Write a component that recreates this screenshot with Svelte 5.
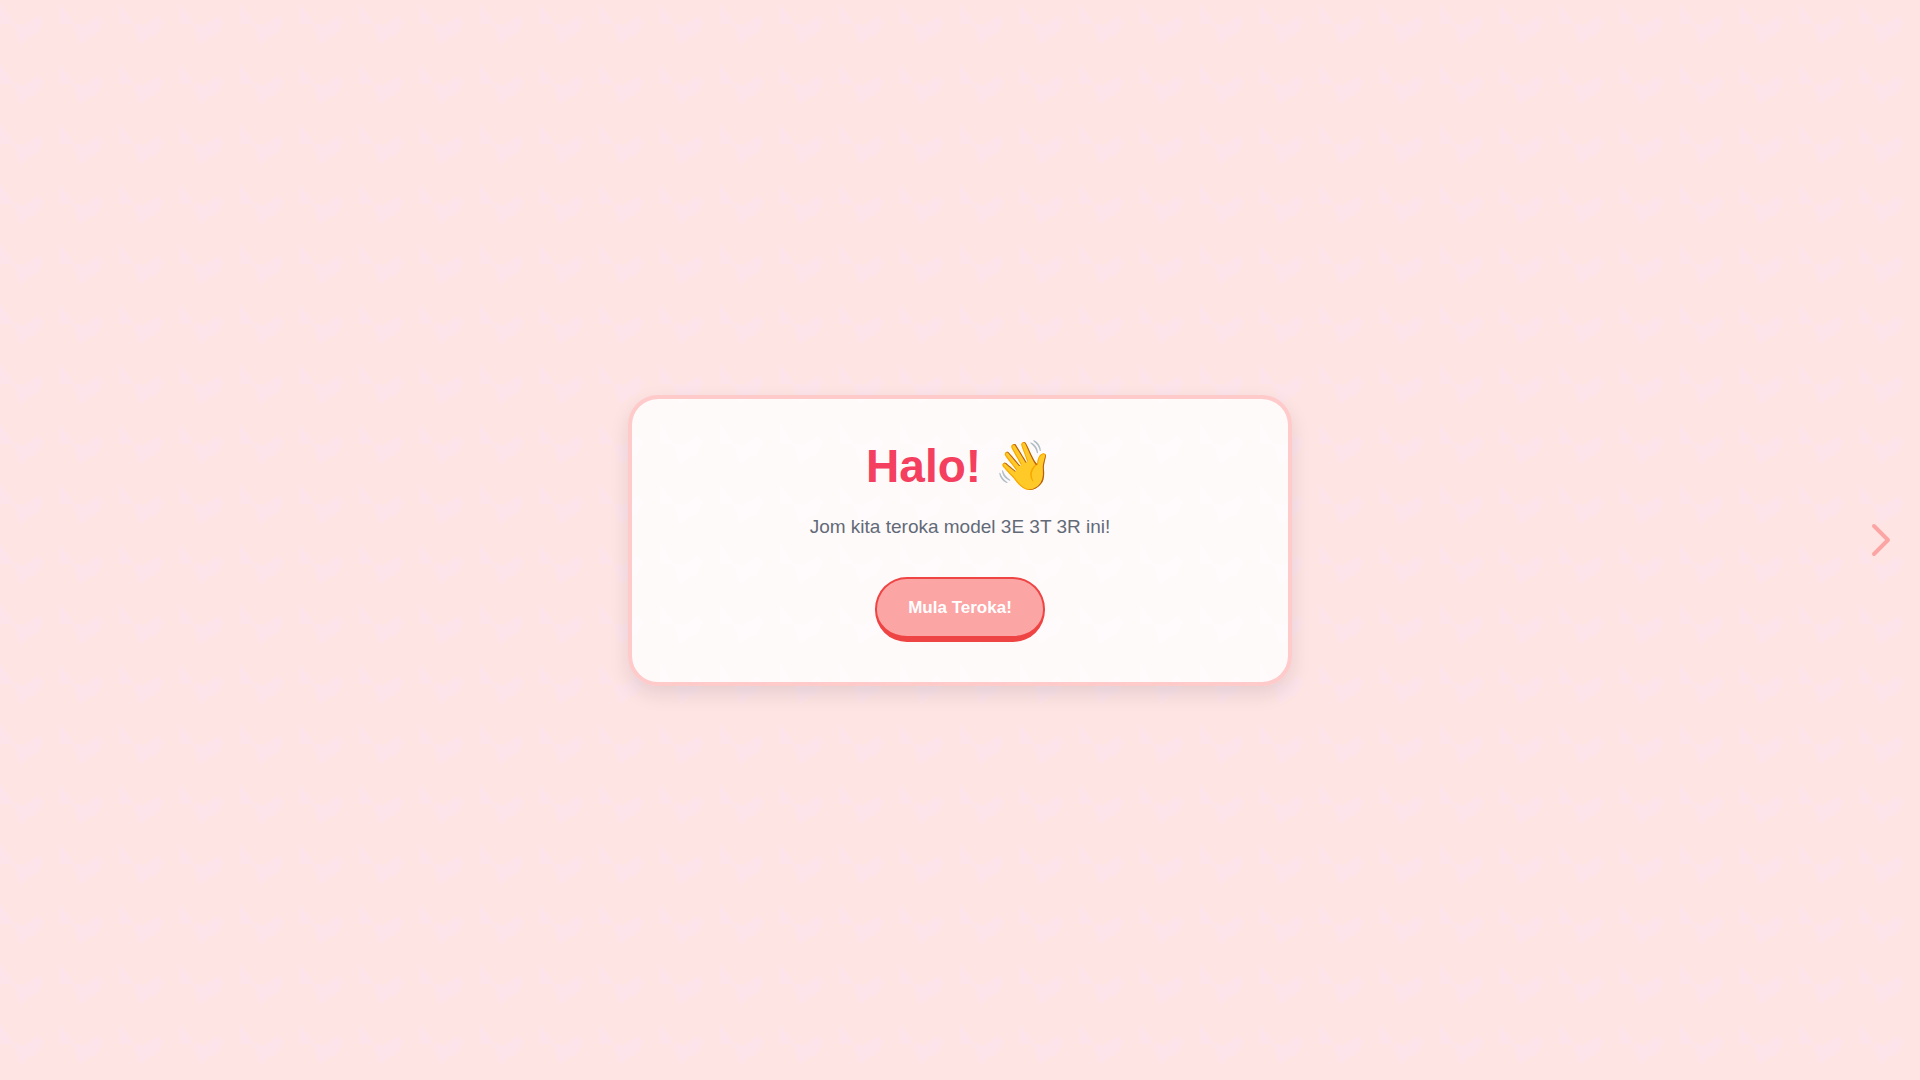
<script>
    let page = $state(0);

    function nextPage() {
        page += 1;
    }
</script>

<main>
    <section class="card">
        <h1>Halo! <span class="wave">👋</span></h1>
        <p>Jom kita teroka model 3E 3T 3R ini!</p>
        <button class="start" type="button" onclick={nextPage}>Mula Teroka!</button>
    </section>
    <button class="next" type="button" aria-label="Seterusnya" onclick={nextPage}>
        <svg viewBox="0 0 48 48" fill="none" stroke="currentColor" stroke-width="4" stroke-linecap="round" stroke-linejoin="round">
            <path d="M18 10l14 14-14 14" />
        </svg>
    </button>
</main>

<style>
    :global(body) {
        margin: 0;
        background-color: #ffe4e4;
        background-image: url("data:image/svg+xml,%3Csvg xmlns='http://www.w3.org/2000/svg' width='60' height='60'%3E%3Cpath fill='%23fde4eb' d='M0 4L14 24H0zM14 24H18L24 26L38 16L43 22L36 35L30 36L20 44z'/%3E%3C/svg%3E");
        font-family: "Liberation Sans", Arial, sans-serif;
    }
    main {
        position: relative;
        display: flex;
        align-items: center;
        justify-content: center;
        min-height: 100vh;
    }
    .card {
        box-sizing: border-box;
        width: 100%;
        max-width: 664px;
        padding: 36px 36px 40px;
        border: 4px solid #fecaca;
        border-radius: 30px;
        background-color: rgba(255, 254, 254, 0.85);
        background-clip: padding-box;
        box-shadow: 0 8px 20px rgba(0, 0, 0, 0.1);
        text-align: center;
    }
    h1 {
        margin: 0 0 15px;
        color: #f43f5e;
        font-size: 46px;
        line-height: 62px;
    }
    .wave {
        font-size: 48px;
        line-height: 1;
    }
    p {
        margin: 0 0 35px;
        color: #626a78;
        font-size: 19px;
        line-height: 30px;
    }
    button {
        font-family: inherit;
        cursor: pointer;
    }
    .start {
        padding: 19px 31px 18px;
        border: 2px solid #ef4444;
        border-bottom-width: 6px;
        border-radius: 32px;
        background-color: #fca5a5;
        color: #fff;
        font-size: 17px;
        font-weight: 700;
        line-height: 20px;
    }
    .next {
        position: absolute;
        top: 50%;
        right: 16px;
        transform: translateY(-50%);
        display: flex;
        padding: 0;
        border: 0;
        background: none;
        color: #fca5a5;
    }
    .next svg {
        width: 48px;
        height: 48px;
    }
</style>
